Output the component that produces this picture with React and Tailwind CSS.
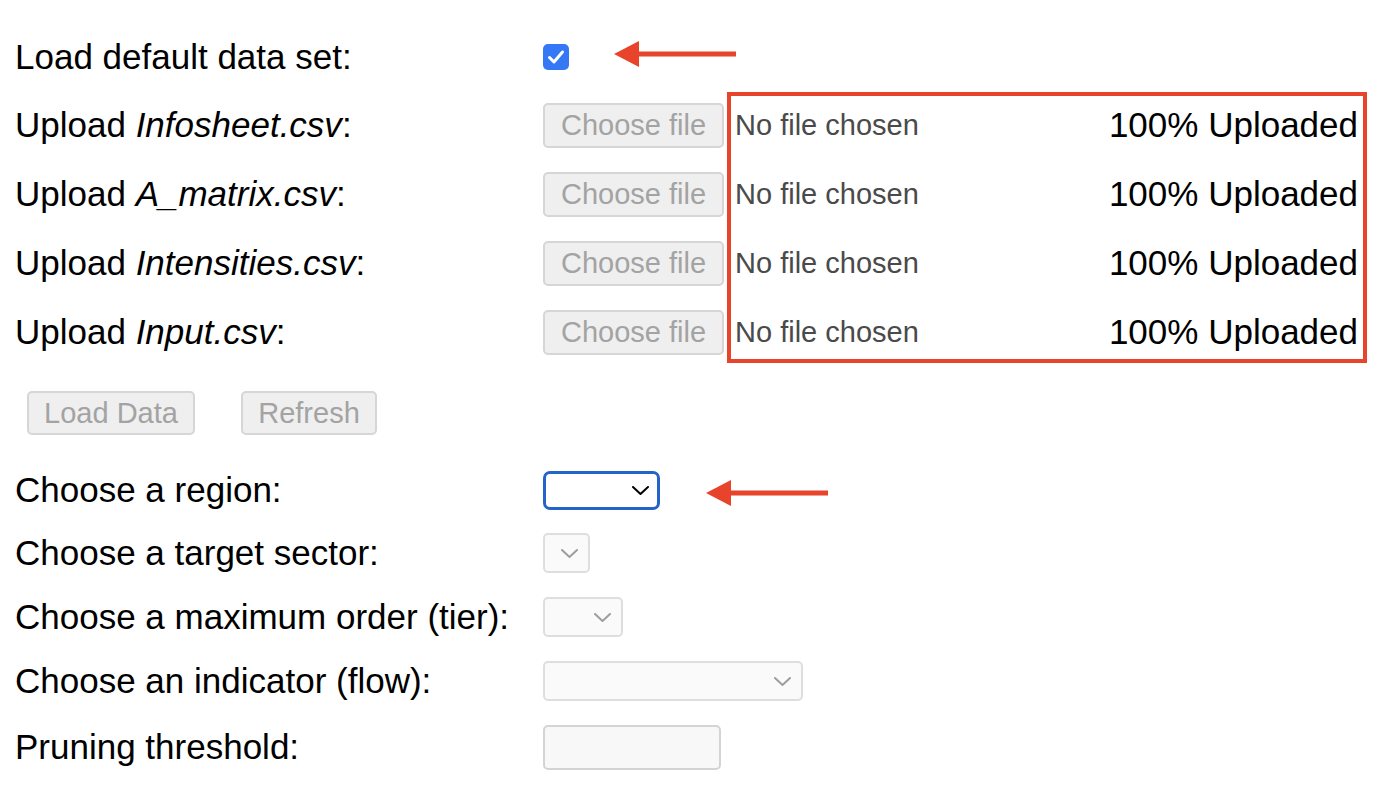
import React from "react";

const Chevron = ({ className }) => (
  <svg width="17" height="9" viewBox="0 0 17 9" fill="none" className={className}>
    <path d="M1 1l7.5 7L16 1" stroke="currentColor" strokeWidth="2" strokeLinecap="round" strokeLinejoin="round" />
  </svg>
);

const Arrow = ({ className }) => (
  <svg width="122" height="26" viewBox="0 0 122 26" className={className}>
    <polygon points="0,13 25,0 25,26" fill="#e8432b" />
    <rect x="24" y="10.5" width="98" height="5" fill="#e8432b" />
  </svg>
);

const uploads = [
  { pre: "Upload ", file: "Infosheet.csv" },
  { pre: "Upload ", file: "A_matrix.csv" },
  { pre: "Upload ", file: "Intensities.csv" },
  { pre: "Upload ", file: "Input.csv" },
];

const FileRow = ({ pre, file }) => (
  <div className="flex items-center h-[69px]">
    <div className="w-[528px]">
      {pre}
      <i>{file}</i>:
    </div>
    <button className="w-[181px] h-[45px] rounded-[5px] border-2 border-[#d6d6d6] bg-[#efefef] text-[29px] text-[#a3a3a3] leading-none">
      Choose file
    </button>
    <span className="ml-[11px] text-[29px] text-[#4a4a4a]">No file chosen</span>
    <span className="ml-auto mr-[30px]">100% Uploaded</span>
  </div>
);

const SelectBox = ({ width, active }) => (
  <div
    className={
      active
        ? `${width} h-[39px] rounded-[7px] border-[3px] border-[#2463c9] bg-white flex items-center justify-end pr-[8px] text-black`
        : `${width} h-[40px] rounded-[5px] border-2 border-[#dedede] bg-[#fafafa] flex items-center justify-end pr-[10px] text-[#9e9e9e]`
    }
  >
    <Chevron />
  </div>
);

const Row = ({ label, children, h }) => (
  <div className={`flex items-center ${h}`}>
    <div className="w-[528px]">{label}</div>
    {children}
  </div>
);

export default function App() {
  return (
    <div className="relative w-[1388px] h-[802px] bg-white text-black text-[35px] font-['Liberation_Sans',Arial,sans-serif] pl-[15px] pt-[23px]">
      <div className="flex items-center h-[68px]">
        <div className="w-[528px]">Load default data set:</div>
        <div className="w-[26px] h-[26px] rounded-[5px] bg-[#3478f6] flex items-center justify-center">
          <svg width="18" height="16" viewBox="0 0 18 16" fill="none">
            <path d="M2.5 8.5l4.5 4.5L15.5 3" stroke="white" strokeWidth="3" strokeLinecap="round" strokeLinejoin="round" />
          </svg>
        </div>
      </div>

      {uploads.map((u) => (
        <FileRow key={u.file} {...u} />
      ))}

      <div className="flex items-center h-[92px] pl-[12px] gap-[46px]">
        <button className="w-[168px] h-[44px] rounded-[5px] border-2 border-[#d6d6d6] bg-[#efefef] text-[29px] text-[#a3a3a3] leading-none">
          Load Data
        </button>
        <button className="w-[136px] h-[44px] rounded-[5px] border-2 border-[#d6d6d6] bg-[#efefef] text-[29px] text-[#a3a3a3] leading-none">
          Refresh
        </button>
      </div>

      <Row label="Choose a region:" h="h-[62px]">
        <SelectBox width="w-[117px]" active />
      </Row>
      <Row label="Choose a target sector:" h="h-[64px]">
        <SelectBox width="w-[47px]" />
      </Row>
      <Row label="Choose a maximum order (tier):" h="h-[64px]">
        <SelectBox width="w-[80px]" />
      </Row>
      <Row label="Choose an indicator (flow):" h="h-[64px]">
        <SelectBox width="w-[260px]" />
      </Row>
      <Row label="Pruning threshold:" h="h-[68px]">
        <div className="w-[178px] h-[45px] rounded-[5px] border-2 border-[#d4d4d4] bg-[#f8f8f8]" />
      </Row>

      {/* annotations */}
      <div className="absolute left-[727px] top-[92px] w-[640px] h-[271px] border-4 border-[#e8432b] pointer-events-none" />
      <Arrow className="absolute left-[614px] top-[41px]" />
      <Arrow className="absolute left-[706px] top-[480px]" />
    </div>
  );
}
